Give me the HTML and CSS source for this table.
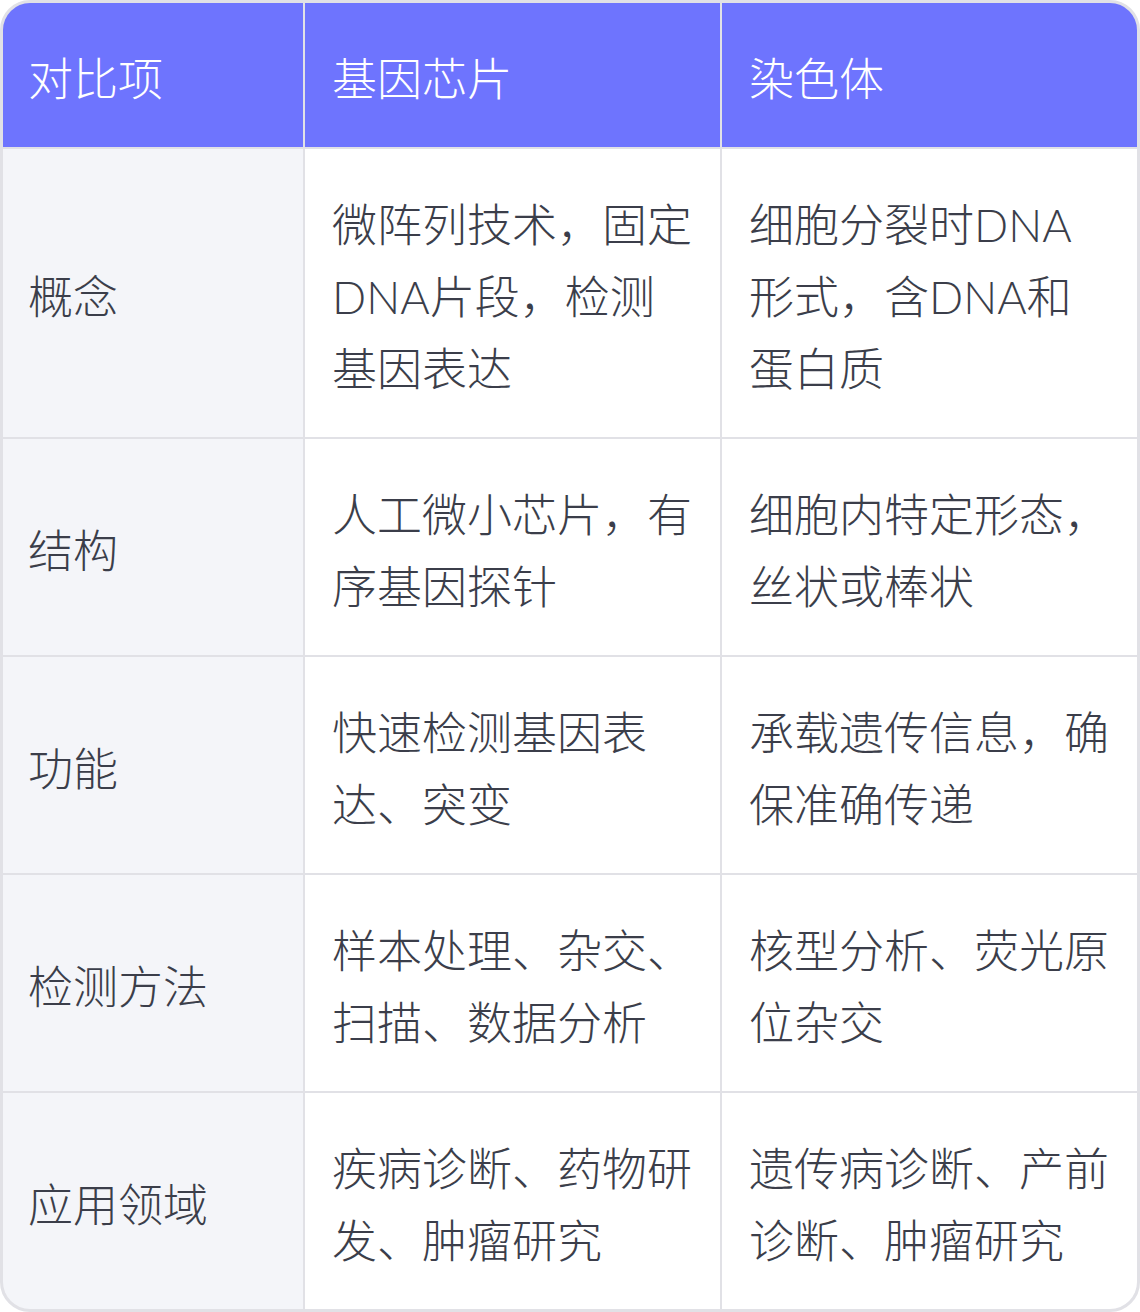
FILE: index.html
```html
<!DOCTYPE html>
<html lang="zh-CN">
<head>
<meta charset="utf-8">
<link rel="stylesheet" href="styles.css">
</head>
<body>
<div class="table">
  <div class="cell head label-col">对比项</div>
  <div class="cell head">基因芯片</div>
  <div class="cell head">染色体</div>

  <div class="cell label">概念</div>
  <div class="cell">微阵列技术，固定DNA片段，检测基因表达</div>
  <div class="cell">细胞分裂时DNA形式，含DNA和蛋白质</div>

  <div class="cell label">结构</div>
  <div class="cell">人工微小芯片，有序基因探针</div>
  <div class="cell">细胞内特定形态，丝状或棒状</div>

  <div class="cell label">功能</div>
  <div class="cell">快速检测基因表达、突变</div>
  <div class="cell">承载遗传信息，确保准确传递</div>

  <div class="cell label">检测方法</div>
  <div class="cell">样本处理、杂交、扫描、数据分析</div>
  <div class="cell">核型分析、荧光原位杂交</div>

  <div class="cell label">应用领域</div>
  <div class="cell">疾病诊断、药物研发、肿瘤研究</div>
  <div class="cell">遗传病诊断、产前诊断、肿瘤研究</div>
</div>
</body>
</html>
```
FILE: styles.css
```css
html, body {
  margin: 0;
  padding: 0;
  background: #ffffff;
}

.table {
  box-sizing: border-box;
  width: 1140px;
  height: 1312px;
  border: 3px solid #e1e1e6;
  border-radius: 30px;
  overflow: hidden;
  display: grid;
  grid-template-columns: 300px 415px 415px;
  grid-template-rows: 144px 288px 216px 216px 216px 216px;
  gap: 2px;
  background: #e1e1e6;
  font-family: Lato, "Noto Sans CJK SC", "Noto Sans", sans-serif;
  font-weight: 300;
  font-size: 45px;
  line-height: 72px;
  color: #3b3e4a;
}

.cell {
  background: #ffffff;
  padding: 8px 26px 0 27px;
  display: flex;
  align-items: center;
}

.cell.head {
  background: #6e74fe;
  color: #ffffff;
}

.cell.label {
  background: #f4f5f9;
}

.cell.label,
.cell.label-col {
  padding-left: 25px;
}
```
